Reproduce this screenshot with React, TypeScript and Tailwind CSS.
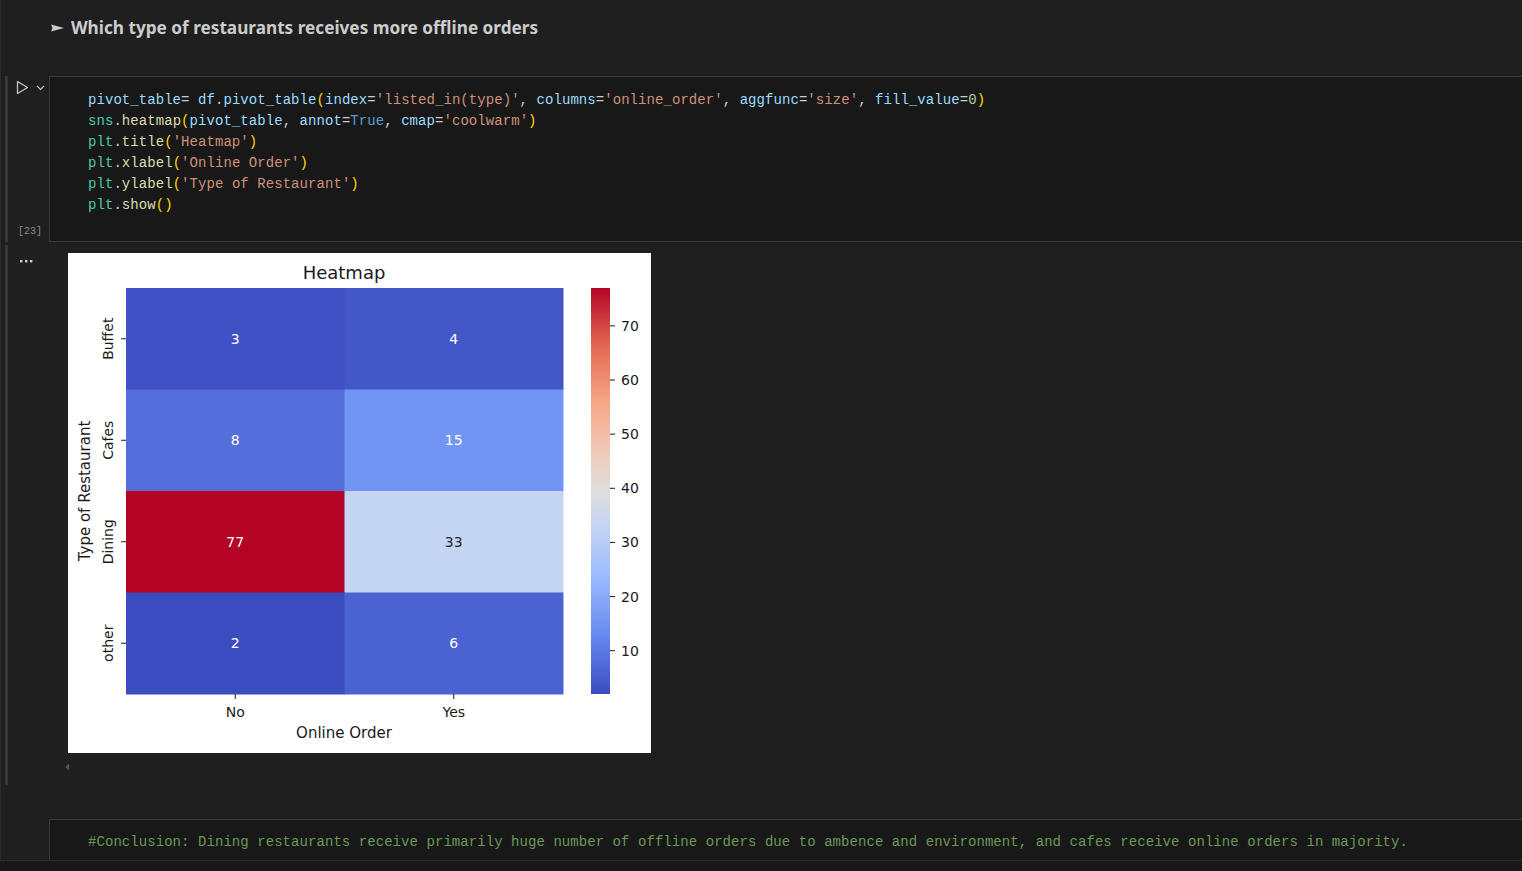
import React from 'react';

// colour tokens for the python snippet (VS Code dark modern)
const C = {
  v: 'text-[#9cdcfe]',
  m: 'text-[#4ec9b0]',
  f: 'text-[#dcdcaa]',
  s: 'text-[#ce9178]',
  k: 'text-[#569cd6]',
  n: 'text-[#b5cea8]',
  p: 'text-[#cccccc]',
  b: 'text-[#ffd700]',
};

type Tok = [keyof typeof C, string];

const CODE: Tok[][] = [
  [
    ['v', 'pivot_table'], ['p', '= '], ['v', 'df'], ['p', '.'], ['v', 'pivot_table'], ['b', '('],
    ['v', 'index'], ['p', '='], ['s', "'listed_in(type)'"], ['p', ', '],
    ['v', 'columns'], ['p', '='], ['s', "'online_order'"], ['p', ', '],
    ['v', 'aggfunc'], ['p', '='], ['s', "'size'"], ['p', ', '],
    ['v', 'fill_value'], ['p', '='], ['n', '0'], ['b', ')'],
  ],
  [
    ['m', 'sns'], ['p', '.'], ['f', 'heatmap'], ['b', '('], ['v', 'pivot_table'], ['p', ', '],
    ['v', 'annot'], ['p', '='], ['k', 'True'], ['p', ', '], ['v', 'cmap'], ['p', '='], ['s', "'coolwarm'"], ['b', ')'],
  ],
  [['m', 'plt'], ['p', '.'], ['f', 'title'], ['b', '('], ['s', "'Heatmap'"], ['b', ')']],
  [['m', 'plt'], ['p', '.'], ['f', 'xlabel'], ['b', '('], ['s', "'Online Order'"], ['b', ')']],
  [['m', 'plt'], ['p', '.'], ['f', 'ylabel'], ['b', '('], ['s', "'Type of Restaurant'"], ['b', ')']],
  [['m', 'plt'], ['p', '.'], ['f', 'show'], ['b', '('], ['b', ')']],
];

// rows of the pivot table: label, [value, colour] for No / Yes
const ROWS: [string, [number, string], [number, string]][] = [
  ['Buffet', [3, '#3f51c4'], [4, '#4357c9']],
  ['Cafes', [8, '#546eda'], [15, '#7295f4']],
  ['Dining', [77, '#b40426'], [33, '#c4d5f3']],
  ['other', [2, '#3b4cc0'], [6, '#4b62d1']],
];

const FONT = "'DejaVu Sans', sans-serif";

function HeatmapChart() {
  const x0 = 58;
  const y0 = 35;
  const cw = 218.5;
  const rh = 101.5;
  const ink = '#1a1a1a';
  const ticks = [10, 20, 30, 40, 50, 60, 70];

  return (
    <svg width="583" height="500" viewBox="0 0 583 500" style={{ fontFamily: FONT }}>
      <defs>
        <linearGradient id="coolwarm" x1="0" y1="1" x2="0" y2="0">
          <stop offset="0%" stopColor="#3b4cc0" />
          <stop offset="14.3%" stopColor="#6788ee" />
          <stop offset="28.6%" stopColor="#9abbff" />
          <stop offset="42.9%" stopColor="#c9d7f0" />
          <stop offset="50%" stopColor="#dddddd" />
          <stop offset="57.1%" stopColor="#edd1c2" />
          <stop offset="71.4%" stopColor="#f7a889" />
          <stop offset="85.7%" stopColor="#e26952" />
          <stop offset="100%" stopColor="#b40426" />
        </linearGradient>
      </defs>
      <rect width="583" height="500" fill="#ffffff" />

      <text x="276" y="19" fontSize="18" fill={ink} textAnchor="middle" dominantBaseline="central">
        Heatmap
      </text>

      {ROWS.map(([label, no, yes], r) => {
        const cy = y0 + rh * r + rh / 2;
        return (
          <g key={label}>
            {[no, yes].map(([val, col], c) => (
              <g key={c}>
                <rect x={x0 + cw * c} y={y0 + rh * r} width={cw + 0.5} height={rh + 0.5} fill={col} />
                <text
                  x={x0 + cw * c + cw / 2}
                  y={cy}
                  fontSize="14"
                  fill={val === 33 ? '#262626' : '#ffffff'}
                  textAnchor="middle"
                  dominantBaseline="central"
                >
                  {val}
                </text>
              </g>
            ))}
            <line x1={x0 - 5} x2={x0} y1={cy} y2={cy} stroke={ink} strokeWidth="1" />
            <text
              transform={`translate(40 ${cy}) rotate(-90)`}
              fontSize="14"
              fill={ink}
              textAnchor="middle"
              dominantBaseline="central"
            >
              {label}
            </text>
          </g>
        );
      })}

      <text
        transform="translate(17 238) rotate(-90)"
        fontSize="15"
        fill={ink}
        textAnchor="middle"
        dominantBaseline="central"
      >
        Type of Restaurant
      </text>

      {['No', 'Yes'].map((t, c) => {
        const cx = x0 + cw * c + cw / 2;
        return (
          <g key={t}>
            <line x1={cx} x2={cx} y1={441} y2={446} stroke={ink} strokeWidth="1" />
            <text x={cx} y="459" fontSize="14" fill={ink} textAnchor="middle" dominantBaseline="central">
              {t}
            </text>
          </g>
        );
      })}
      <text x="276" y="480" fontSize="15" fill={ink} textAnchor="middle" dominantBaseline="central">
        Online Order
      </text>

      <rect x="523" y="35" width="19" height="406" fill="url(#coolwarm)" />
      {ticks.map((v) => {
        const ty = 441 - ((v - 2) / 75) * 406;
        return (
          <g key={v}>
            <line x1="542" x2="547" y1={ty} y2={ty} stroke={ink} strokeWidth="1" />
            <text x="553" y={ty} fontSize="14" fill={ink} dominantBaseline="central">
              {v}
            </text>
          </g>
        );
      })}
    </svg>
  );
}

function Bar({ show = true }: { show?: boolean }) {
  return <div className={`ml-[4px] w-[3px] shrink-0 ${show ? 'bg-[#37373d]' : ''}`} />;
}

export default function App() {
  return (
    <div className="flex h-[871px] w-full flex-col overflow-hidden bg-[#1f1f1f]">
      <div className="flex flex-1 flex-col border-l border-[#2b2b2b]">
        {/* markdown heading */}
        <div className="h-[76px] pl-[50px] pt-[16px]">
          <div
            className="flex items-center text-[17.2px] font-bold leading-[24px] text-[#cccccc]"
            style={{ fontFamily: "'Noto Sans', sans-serif" }}
          >
            {/* the black right-pointing pointer glyph */}
            <svg className="mr-[7px]" width="13" height="8" viewBox="0 0 13 8">
              <path d="M0 0.5 L13 4 L0 7.5 L1.5 4 Z" fill="#cccccc" />
            </svg>
            Which type of restaurants receives more offline orders
          </div>
        </div>

        {/* code cell */}
        <div className="flex">
          <div className="flex w-[48px] shrink-0">
            <Bar />
            <div className="flex flex-1 flex-col justify-between pb-[4px] pl-[8px] pt-[4px]">
              <div className="flex items-center">
                <svg width="13" height="15" viewBox="0 0 13 15">
                  <path d="M1.5 1.5 L11.5 7.5 L1.5 13.5 Z" fill="none" stroke="#c5c5c5" strokeWidth="1.3" strokeLinejoin="round" />
                </svg>
                <svg className="ml-[7px]" width="9" height="6" viewBox="0 0 9 6">
                  <path d="M1 1 L4.5 4.5 L8 1" fill="none" stroke="#c5c5c5" strokeWidth="1.1" />
                </svg>
              </div>
              <div
                className="ml-[2px] text-[10px] leading-[12px] text-[#8c8c8c]"
                style={{ fontFamily: "'Liberation Mono', monospace" }}
              >
                [23]
              </div>
            </div>
          </div>
          <div
            className="flex-1 border-y border-l border-[#3a3a3a] bg-[#181818] pb-[25px] pl-[38px] pt-[13px] text-[14px] leading-[21px] tracking-[0.06px]"
            style={{ fontFamily: "'Liberation Mono', monospace" }}
          >
            {CODE.map((line, i) => (
              <div key={i} className="whitespace-pre">
                {line.map(([c, t], j) => (
                  <span key={j} className={C[c]}>
                    {t}
                  </span>
                ))}
              </div>
            ))}
          </div>
        </div>

        {/* output */}
        <div className="mt-[3px] flex">
          <div className="flex w-[48px] shrink-0">
            <Bar />
            <div className="pl-[12px] pt-[15px]">
              <svg width="14" height="3" viewBox="0 0 14 3">
                <rect x="0" y="0" width="2.4" height="2.4" fill="#cccccc" />
                <rect x="5" y="0" width="2.4" height="2.4" fill="#cccccc" />
                <rect x="10" y="0" width="2.4" height="2.4" fill="#cccccc" />
              </svg>
            </div>
          </div>
          <div className="flex flex-col">
            <div className="pl-[19px] pt-[8px]">
              <HeatmapChart />
            </div>
            <div className="h-[32px] pl-[16px] pt-[10px]">
              <svg width="5" height="8" viewBox="0 0 5 8">
                <path d="M4 0.5 L0.5 4 L4 7.5 Z" fill="#555555" />
              </svg>
            </div>
          </div>
        </div>

        {/* conclusion cell */}
        <div className="mt-[34px] flex">
          <div className="w-[48px] shrink-0" />
          <div
            className="flex h-[41px] flex-1 items-center border-l border-t border-[#3a3a3a] bg-[#181818] pl-[38px] pt-[5px] text-[14px] tracking-[0.06px] text-[#6a9955]"
            style={{ fontFamily: "'Liberation Mono', monospace" }}
          >
            <span className="whitespace-pre">
              #Conclusion: Dining restaurants receive primarily huge number of offline orders due to ambence and environment, and cafes receive online orders in majority.
            </span>
          </div>
        </div>
      </div>
      <div className="h-[11px] shrink-0 border-t border-[#2b2b2b] bg-[#181818]" />
    </div>
  );
}
